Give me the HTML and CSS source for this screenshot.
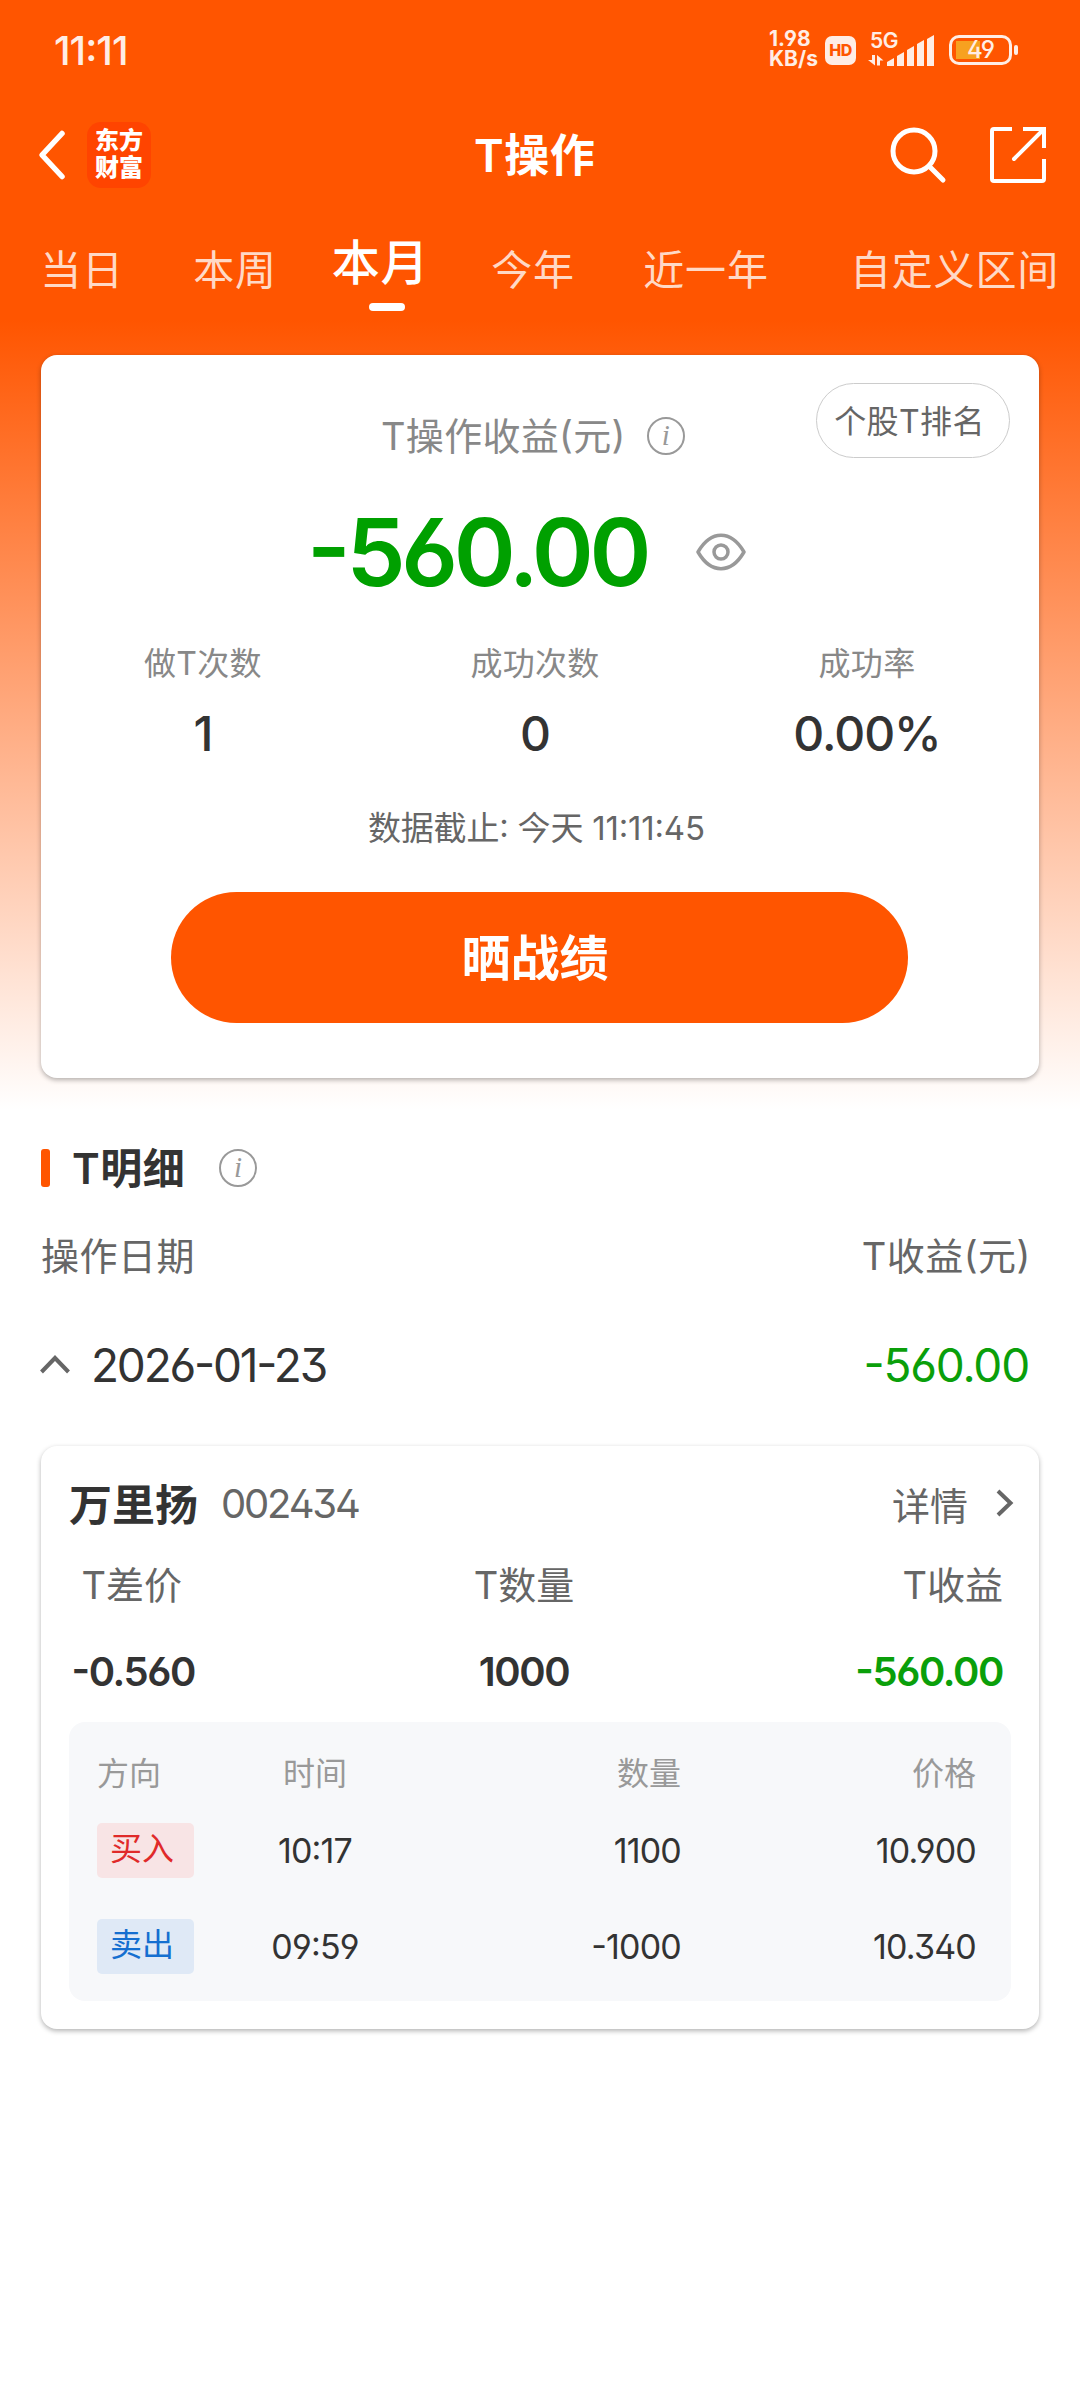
FILE: index.html
```html
<!DOCTYPE html>
<html lang="zh-CN">
<head>
    <meta charset="UTF-8">
    <meta name="viewport" content="width=device-width, initial-scale=1.0">
    <title>T操作</title>
    <link rel="stylesheet" href="styles.css">
</head>
<body>
    <div class="page">
        <!-- Status bar -->
        <div class="status-bar">
            <span class="clock">11:11</span>
            <div class="net-speed">
                <span>1.98</span>
                <span>KB/s</span>
            </div>
            <span class="hd">HD</span>
            <div class="signal">
                <span class="network">5G</span>
                <svg width="70" height="32" viewBox="0 0 70 32">
                    <g fill="#ffede5">
                        <path d="M5 21h3v10.500L1 26h4zM10 31.500V21l6.500 5.500H13v5z"/>
                        <path d="M20 32v-4l7-4v8zM30 32v-10l7-4v14zM40 32v-16l7-4v20zM50 32v-22l7-4v26zM60 32v-27l7-4v31z"/>
                    </g>
                </svg>
            </div>
            <div class="battery">
                <span class="battery-body"><span class="battery-text">49</span></span>
                <span class="battery-nub"></span>
            </div>
        </div>

        <!-- Title bar -->
        <div class="nav-bar">
            <div class="nav-left">
                <svg width="28" height="52" viewBox="0 0 28 52">
                    <path d="M24 4.500L4 26l20 21.500" fill="none" stroke="#fff" stroke-width="5.500" stroke-linecap="round" stroke-linejoin="round"/>
                </svg>
                <div class="logo"><span>东方</span><span>财富</span></div>
            </div>
            <h1>T操作</h1>
            <div class="nav-right">
                <svg width="58" height="58" viewBox="0 0 58 58" fill="none" stroke="#fff" stroke-width="5">
                    <circle cx="25" cy="25" r="21"/>
                    <path d="M40 40l14 14" stroke-linecap="round"/>
                </svg>
                <svg width="56" height="56" viewBox="0 0 56 56" fill="none" stroke="#fff" stroke-width="4">
                    <path d="M22 2H4a2 2 0 0 0-2 2v48a2 2 0 0 0 2 2h48a2 2 0 0 0 2-2V32"/>
                    <path d="M33 2h21v19"/>
                    <path d="M53 3L24 32" stroke-linecap="round"/>
                </svg>
            </div>
        </div>

        <!-- Period tabs -->
        <div class="tabs">
            <div class="tab">当日</div>
            <div class="tab">本周</div>
            <div class="tab active">本月</div>
            <div class="tab">今年</div>
            <div class="tab">近一年</div>
            <div class="tab">自定义区间</div>
        </div>

        <!-- Summary card -->
        <div class="card summary">
            <button class="rank-btn">个股T排名</button>
            <div class="summary-title"><span>T操作收益(元)</span><span class="info">i</span></div>
            <div class="profit">
                <span class="profit-value">-560.00</span>
                <svg width="50" height="38" viewBox="0 0 50 38" fill="none" stroke="#999" stroke-width="3.500">
                    <path d="M2 19C15 -3.300 35 -3.300 48 19C35 41.300 15 41.300 2 19z" stroke-linejoin="round"/>
                    <circle cx="25" cy="19" r="7"/>
                </svg>
            </div>
            <div class="stats">
                <div class="stat">
                    <div class="stat-label">做T次数</div>
                    <div class="stat-value">1</div>
                </div>
                <div class="stat">
                    <div class="stat-label">成功次数</div>
                    <div class="stat-value">0</div>
                </div>
                <div class="stat">
                    <div class="stat-label">成功率</div>
                    <div class="stat-value">0.00%</div>
                </div>
            </div>
            <div class="deadline">数据截止: 今天 11:11:45</div>
            <button class="share-btn">晒战绩</button>
        </div>

        <!-- Detail list -->
        <div class="section-title">
            <span class="bar"></span>
            <h2>T明细</h2>
            <span class="info">i</span>
        </div>
        <div class="list-head">
            <span>操作日期</span>
            <span>T收益(元)</span>
        </div>
        <div class="list-date">
            <svg width="30" height="20" viewBox="0 0 30 20">
                <path d="M1.500 17L15 3l13.500 14" fill="none" stroke="#666" stroke-width="4"/>
            </svg>
            <span class="date">2026-01-23</span>
            <span class="date-profit green">-560.00</span>
        </div>

        <div class="card stock">
            <div class="stock-head">
                <span class="stock-name">万里扬</span>
                <span class="stock-code">002434</span>
                <span class="stock-more">详情</span>
                <svg width="18" height="28" viewBox="0 0 18 28">
                    <path d="M2 2l12.500 12L2 26" fill="none" stroke="#666" stroke-width="4"/>
                </svg>
            </div>
            <div class="stock-row labels">
                <span>T差价</span>
                <span>T数量</span>
                <span>T收益</span>
            </div>
            <div class="stock-row values">
                <span>-0.560</span>
                <span>1000</span>
                <span class="green">-560.00</span>
            </div>
            <div class="trades">
                <div class="trade trade-head">
                    <span>方向</span>
                    <span>时间</span>
                    <span>数量</span>
                    <span>价格</span>
                </div>
                <div class="trade">
                    <span class="tag buy">买入</span>
                    <span>10:17</span>
                    <span>1100</span>
                    <span>10.900</span>
                </div>
                <div class="trade">
                    <span class="tag sell">卖出</span>
                    <span>09:59</span>
                    <span>-1000</span>
                    <span>10.340</span>
                </div>
            </div>
        </div>
    </div>
</body>
</html>
```

FILE: styles.css
```css
* {
    box-sizing: border-box;
}

body, html {
    margin: 0;
    padding: 0;
    font-family: Inter, "Noto Sans CJK SC", sans-serif;
    font-feature-settings: "ss01", "cv09", "case";
    color: #333;
    background: #fff;
}

h1, h2 {
    margin: 0;
    font-weight: 600;
}

button {
    font-family: inherit;
    font-feature-settings: inherit;
    padding: 0;
}

svg {
    display: block;
    flex: none;
}

.page {
    width: 1080px;
    height: 2400px;
    background: linear-gradient(#ff5500 320px, #fff 1110px);
    overflow: hidden;
    white-space: nowrap;
}

.green {
    color: #0a9f0a;
}

/* Status bar */
.status-bar {
    display: flex;
    align-items: center;
    height: 100px;
    padding: 0 62px 0 54px;
    color: #ffede5;
}

.clock {
    flex: 1;
    font-size: 40px;
    font-weight: 500;
    letter-spacing: -1px;
}

.net-speed {
    display: flex;
    flex-direction: column;
    width: 56px;
    font-size: 21px;
    font-weight: 700;
    line-height: 20px;
    padding-bottom: 2px;
}

.hd {
    width: 31px;
    height: 29px;
    border-radius: 7px;
    background: #ffede5;
    color: #ff5500;
    font-size: 16px;
    font-weight: 800;
    line-height: 29px;
    text-align: center;
    letter-spacing: -0.5px;
}

.signal {
    position: relative;
    margin-left: 11px;
    width: 82px;
}

.network {
    position: absolute;
    left: 3px;
    top: -3px;
    font-size: 21px;
    font-weight: 600;
    line-height: 20px;
    letter-spacing: -0.5px;
}

.battery {
    display: flex;
    align-items: center;
    gap: 2px;
}

.battery-body {
    width: 63px;
    height: 30px;
    border: 3px solid #ffede5;
    border-radius: 10px;
    padding: 3px 4px;
    background: linear-gradient(#f7a120, #f7a120) 4px 3px / 24px 18px no-repeat;
}

.battery-text {
    display: block;
    font-size: 24px;
    font-weight: 500;
    line-height: 18px;
    text-align: center;
    letter-spacing: -1px;
}

.battery-nub {
    width: 4px;
    height: 10px;
    border-radius: 2px;
    background: #ffede5;
}

/* Title bar */
.nav-bar {
    display: flex;
    align-items: center;
    height: 110px;
    padding: 0 34px 0 38px;
    color: #fff;
}

.nav-left, .nav-right {
    display: flex;
    align-items: center;
    width: 436px;
}

.nav-left {
    gap: 21px;
}

.nav-right {
    justify-content: flex-end;
    gap: 43px;
    flex: 1;
}

.logo {
    display: flex;
    flex-direction: column;
    justify-content: center;
    width: 64px;
    height: 66px;
    padding-bottom: 2px;
    border-radius: 14px;
    background: #ff4400;
    font-size: 24px;
    font-weight: 900;
    line-height: 27px;
    text-align: center;
}

.nav-bar h1 {
    font-size: 45px;
    letter-spacing: 0.5px;
    padding-bottom: 6px;
}

/* Tabs */
.tabs {
    display: flex;
    height: 145px;
    color: #ffd9c6;
    font-size: 41px;
    line-height: 60px;
    letter-spacing: 0.8px;
    text-align: center;
    padding-top: 30px;
}

.tab:nth-child(1) { width: 164px; }
.tab:nth-child(2) { width: 142px; }
.tab:nth-child(3) { width: 149px; }
.tab:nth-child(4) { width: 156px; }
.tab:nth-child(5) { width: 190px; }
.tab:nth-child(6) { width: 251px; margin-left: 28px; }

.tab.active {
    color: #fff;
    font-size: 48px;
    font-weight: 500;
    line-height: 46px;
}

.tab.active::after {
    content: "";
    display: block;
    width: 36px;
    height: 8px;
    margin: 17px 0 0 63px;
    border-radius: 4px;
    background: #fff;
}

/* Cards */
.card {
    margin: 0 41px;
    border-radius: 16px;
    background: #fff;
    box-shadow: 0 2px 5px rgba(0, 0, 0, 0.3);
}

.summary {
    position: relative;
    height: 723px;
    padding-top: 56px;
}

.rank-btn {
    position: absolute;
    right: 29px;
    top: 28px;
    width: 194px;
    height: 75px;
    border: 1px solid #ccc;
    border-radius: 38px;
    background: #fff;
    color: #666;
    font-size: 32px;
    letter-spacing: 0.4px;
    padding: 0 7px 4px 0;
}

.info {
    width: 38px;
    height: 38px;
    border: 2.5px solid #999;
    border-radius: 50%;
    color: #999;
    font-family: "Liberation Serif", serif;
    font-size: 29px;
    font-style: italic;
    font-weight: 400;
    line-height: 32px;
    text-align: center;
}

.summary-title {
    display: flex;
    align-items: center;
    height: 50px;
    padding-left: 340px;
    color: #888;
    font-size: 38px;
}

.summary-title span:first-child {
    letter-spacing: 0.3px;
    padding-bottom: 5px;
}

.summary-title .info {
    margin-left: 21px;
}

.profit {
    display: flex;
    align-items: center;
    justify-content: space-between;
    height: 110px;
    margin: 36px 293px 0 266px;
}

.profit-value {
    color: #00a000;
    font-size: 94px;
    font-weight: 600;
    letter-spacing: -4.3px;
}

.stats {
    display: flex;
    margin: 34px 0 0 -4px;
    text-align: center;
}

.stat {
    width: 332px;
}

.stat-label {
    color: #888;
    font-size: 32px;
    line-height: 46px;
    letter-spacing: 0.3px;
}

.stat-value {
    margin-top: 17px;
    font-size: 48px;
    font-weight: 500;
    line-height: 60px;
    letter-spacing: -1px;
}

.deadline {
    margin-top: 39px;
    padding-left: 327px;
    color: #666;
    font-size: 33px;
    line-height: 50px;
    letter-spacing: -0.2px;
}

.share-btn {
    display: block;
    width: 737px;
    height: 131px;
    margin: 39px 0 0 130px;
    border: none;
    border-radius: 66px;
    background: #ff5500;
    color: #fff;
    font-size: 49px;
    font-weight: 600;
    padding: 0 9px 6px 0;
}

/* Detail list */
.section-title {
    display: flex;
    align-items: center;
    height: 60px;
    margin: 60px 41px 0;
}

.section-title .bar {
    width: 9px;
    height: 38px;
    border-radius: 3px;
    background: #ff5500;
}

.section-title h2 {
    width: 147px;
    margin-left: 22px;
    padding-bottom: 5px;
    font-size: 42px;
    letter-spacing: 0.5px;
}

.list-head {
    display: flex;
    justify-content: space-between;
    padding: 0 49px 0 41px;
    margin-top: 28px;
    color: #666;
    font-size: 38px;
    line-height: 60px;
    letter-spacing: 0.5px;
}

.list-date {
    display: flex;
    align-items: center;
    height: 60px;
    margin-top: 49px;
    padding: 0 51px 0 40px;
    font-size: 46px;
}

.list-date .date {
    flex: 1;
    margin-left: 21px;
    letter-spacing: -2.2px;
}

.date-profit {
    letter-spacing: -1.2px;
}

/* Stock card */
.stock {
    height: 583px;
    margin-top: 51px;
    padding: 27px 28px 0;
}

.stock-head {
    display: flex;
    align-items: center;
    height: 60px;
}

.stock-name {
    font-size: 43px;
    font-weight: 600;
    padding-bottom: 3px;
}

.stock-code {
    flex: 1;
    margin-left: 23px;
    color: #666;
    font-size: 40px;
    letter-spacing: -2.2px;
}

.stock-more {
    margin-right: 28px;
    color: #666;
    font-size: 38px;
}

.stock-head svg {
    margin-right: -3px;
}

.stock-row {
    display: grid;
    grid-template-columns: 126px 1fr 150px;
    padding-right: 8px;
    line-height: 60px;
    text-align: right;
}

.stock-row span:nth-child(2) {
    text-align: center;
}

.labels {
    margin-top: 22px;
    color: #666;
    font-size: 38px;
}

.labels span:first-child {
    padding-right: 13px;
}

.values {
    margin-top: 27px;
    font-size: 40px;
    font-weight: 600;
    letter-spacing: -1.4px;
}

.trades {
    height: 279px;
    margin-top: 20px;
    padding: 18px 35px 0 28px;
    border-radius: 16px;
    background: #f7f8fa;
}

.trade {
    display: grid;
    grid-template-columns: 97px 242px 1fr 295px;
    align-items: center;
    height: 96px;
    font-size: 34px;
    letter-spacing: -0.8px;
    text-align: right;
}

.trade span:nth-child(2) {
    text-align: center;
}

.trade-head {
    height: 62px;
    color: #999;
    font-size: 32px;
    letter-spacing: 0;
}

.trade-head span:first-child {
    text-align: left;
}

.tag {
    height: 55px;
    padding-left: 13px;
    border-radius: 5px;
    font-size: 32px;
    line-height: 51px;
    letter-spacing: 0;
    text-align: left;
}

.buy {
    background: #f8e4e5;
    color: #e02a2a;
}

.sell {
    background: #dfe9f6;
    color: #156fd0;
}
```
